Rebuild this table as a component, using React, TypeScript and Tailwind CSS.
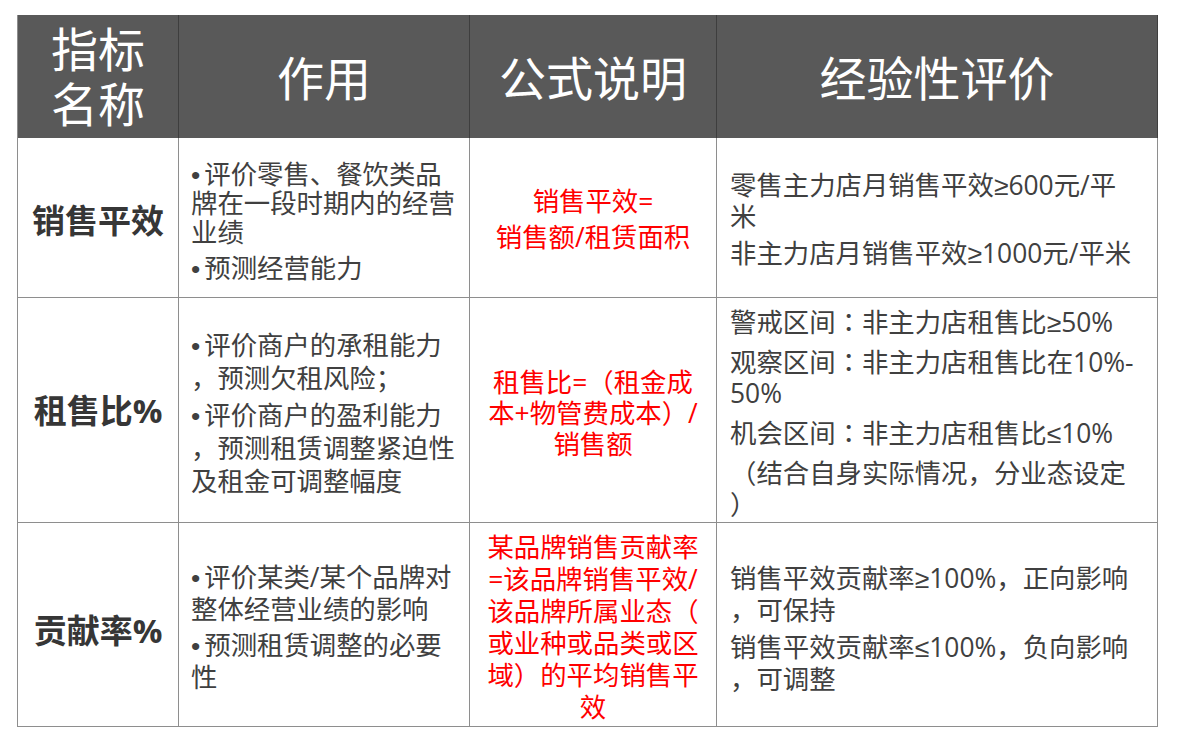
import React from 'react';

const font = "font-['Open_Sans','Noto_Sans_CJK_SC',sans-serif]";

// narrow bullet / comparison signs and a centred colon, as in the original deck
function Line({ text }: { text: string }) {
  const parts = text.split(/([•≥≤：])/);
  return (
    <div className="whitespace-nowrap">
      {parts.map((p, i) =>
        p === '•' ? (
          <span key={i} className="font-['Liberation_Sans',sans-serif] leading-[0] mr-[4px]">
            {p}
          </span>
        ) : p === '≥' || p === '≤' ? (
          <span key={i} className="font-['Liberation_Sans',sans-serif] leading-[0]">
            {p}
          </span>
        ) : p === '：' ? (
          <span key={i} className="font-['Noto_Sans_CJK_TC',sans-serif] leading-[0]">
            {p}
          </span>
        ) : (
          <React.Fragment key={i}>{p}</React.Fragment>
        )
      )}
    </div>
  );
}

function Block({ paras, className }: { paras: string[][]; className: string }) {
  return (
    <div className={className}>
      {paras.map((lines, i) => (
        <div key={i}>
          {lines.map((line, j) => (
            <Line key={j} text={line} />
          ))}
        </div>
      ))}
    </div>
  );
}

const head = 'bg-[#595959] border-r border-[#3e3e3e] text-white flex items-center justify-center';
const cell = 'border-r border-b border-[#8e8e8e] flex flex-col';

export default function App() {
  return (
    <div className={`w-[1177px] h-[742px] bg-white pt-[15px] pl-[17px] ${font}`}>
      <div className="grid grid-cols-[161px_291px_247px_441px] grid-rows-[123px_160px_225px_204px] w-[1141px] border-l border-[#8e8e8e]">
        {/* header */}
        <div className={`${head} flex-col text-[47px] leading-[55px]`}>
          <div>指标</div>
          <div>名称</div>
        </div>
        <div className={`${head} pt-[4px] text-[47px]`}>作用</div>
        <div className={`${head} pt-[4px] text-[47px]`}>公式说明</div>
        <div className={`${head} pt-[4px] text-[47px]`}>经验性评价</div>

        {/* 销售平效 */}
        <div className={`${cell} items-center justify-center pt-[6px] text-[33px] font-bold text-[#363636]`}>
          销售平效
        </div>
        <div className={`${cell} pl-[12px] pt-[22px] text-[26.4px] text-[#404040]`}>
          <Block
            className="flex flex-col gap-[7px] leading-[29px]"
            paras={[['•评价零售、餐饮类品', '牌在一段时期内的经营', '业绩'], ['•预测经营能力']]}
          />
        </div>
        <div className={`${cell} items-center pt-[48px] text-[26.4px] text-[#ff0000]`}>
          <Block
            className="flex flex-col items-center gap-[6px] leading-[30px] text-center"
            paras={[['销售平效='], ['销售额/租赁面积']]}
          />
        </div>
        <div className={`${cell} pl-[13px] pt-[32px] text-[26.4px] text-[#404040]`}>
          <Block
            className="flex flex-col gap-[6px] leading-[31px]"
            paras={[['零售主力店月销售平效≥600元/平', '米'], ['非主力店月销售平效≥1000元/平米']]}
          />
        </div>

        {/* 租售比% */}
        <div className={`${cell} items-center justify-center pt-[2px] text-[33px] font-bold text-[#363636]`}>
          租售比%
        </div>
        <div className={`${cell} pl-[12px] pt-[31px] text-[26.4px] text-[#404040]`}>
          <Block
            className="flex flex-col gap-[4px] leading-[33px]"
            paras={[
              ['•评价商户的承租能力', '，预测欠租风险；'],
              ['•评价商户的盈利能力', '，预测租赁调整紧迫性', '及租金可调整幅度'],
            ]}
          />
        </div>
        <div className={`${cell} items-center pt-[69px] text-[26.4px] text-[#ff0000]`}>
          <Block
            className="flex flex-col items-center leading-[31px] text-center"
            paras={[['租售比=（租金成', '本+物管费成本）/', '销售额']]}
          />
        </div>
        <div className={`${cell} pl-[13px] pt-[9px] text-[26.4px] text-[#404040]`}>
          <Block
            className="flex flex-col gap-[9px] leading-[31px]"
            paras={[
              ['警戒区间：非主力店租售比≥50%'],
              ['观察区间：非主力店租售比在10%-', '50%'],
              ['机会区间：非主力店租售比≤10%'],
              ['（结合自身实际情况，分业态设定', '）'],
            ]}
          />
        </div>

        {/* 贡献率% */}
        <div className={`${cell} items-center justify-center pt-[13px] text-[33px] font-bold text-[#363636]`}>
          贡献率%
        </div>
        <div className={`${cell} pl-[12px] pt-[38px] text-[26.4px] text-[#404040]`}>
          <Block
            className="flex flex-col gap-[4px] leading-[32px]"
            paras={[['•评价某类/某个品牌对', '整体经营业绩的影响'], ['•预测租赁调整的必要', '性']]}
          />
        </div>
        <div className={`${cell} items-center pt-[8px] text-[26.4px] text-[#ff0000]`}>
          <Block
            className="flex flex-col items-center leading-[32px] text-center"
            paras={[
              ['某品牌销售贡献率', '=该品牌销售平效/', '该品牌所属业态（', '或业种或品类或区', '域）的平均销售平', '效'],
            ]}
          />
        </div>
        <div className={`${cell} pl-[13px] pt-[39px] text-[26.4px] text-[#404040]`}>
          <Block
            className="flex flex-col gap-[5px] leading-[32px]"
            paras={[
              ['销售平效贡献率≥100%，正向影响', '，可保持'],
              ['销售平效贡献率≤100%，负向影响', '，可调整'],
            ]}
          />
        </div>
      </div>
    </div>
  );
}
